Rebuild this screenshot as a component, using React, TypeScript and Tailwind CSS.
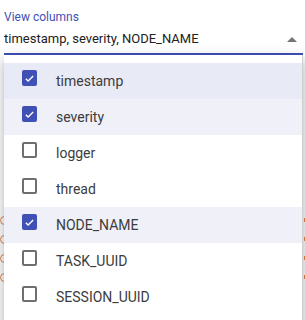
import React from "react";

const items: { label: string; checked: boolean; bg: string }[] = [
  { label: "timestamp", checked: true, bg: "bg-[#e8eaf6]" },
  { label: "severity", checked: true, bg: "bg-[#eff0f8]" },
  { label: "logger", checked: false, bg: "bg-white" },
  { label: "thread", checked: false, bg: "bg-white" },
  { label: "NODE_NAME", checked: true, bg: "bg-[#eff0f8]" },
  { label: "TASK_UUID", checked: false, bg: "bg-white" },
  { label: "SESSION_UUID", checked: false, bg: "bg-white" },
];

function Box({ checked }: { checked: boolean }) {
  if (checked) {
    return (
      <div className="w-[15px] h-[16px] rounded-[2px] bg-[#3f51b5] flex items-center justify-center">
        <svg width="11" height="11" viewBox="0 0 24 24">
          <path d="M4 12.5l5 5L20 6.5" fill="none" stroke="white" strokeWidth="3" />
        </svg>
      </div>
    );
  }
  return <div className="w-[15px] h-[16px] rounded-[2px] border-2 border-[#6f6f6f] bg-white" />;
}

export default function App() {
  return (
    <div
      className="relative w-[305px] h-[320px] overflow-hidden bg-white"
      style={{ fontFamily: "Roboto, 'Liberation Sans', sans-serif" }}
    >
      {/* background content peeking out */}
      <div className="absolute left-[0px] top-[216px] flex flex-col gap-[10px]">
        <div className="w-[9px] h-[9px] rounded-full border border-[#e8844a]" />
        <div className="w-[9px] h-[9px] rounded-full border border-[#e8844a]" />
        <div className="w-[9px] h-[9px] rounded-full border border-[#e8844a]" />
        <div className="w-[9px] h-[9px] rounded-full border border-[#e8844a]" />
      </div>
      <div className="absolute left-[304px] top-[218px] flex flex-col gap-[15px]">
        <div className="w-[1px] h-[4px] bg-[#e8844a]" />
        <div className="w-[1px] h-[4px] bg-[#e8844a]" />
        <div className="w-[1px] h-[4px] bg-[#e8844a]" />
        <div className="w-[1px] h-[4px] bg-[#e8844a]" />
      </div>

      {/* select field */}
      <div className="ml-[4px] mr-[2px] pt-[9px] border-b-2 border-[#3f51b5] h-[55px] flex flex-col">
        <div className="text-[12px] leading-[16px] text-[#3f51b5]">View columns</div>
        <div className="mt-[5px] flex items-center justify-between">
          <span className="text-[13px] leading-[18px] text-[#212121]">timestamp, severity, NODE_NAME</span>
          <svg width="10" height="5" viewBox="0 0 10 5" className="mr-[6px]">
            <path d="M0 5L5 0L10 5Z" fill="#757575" />
          </svg>
        </div>
      </div>

      {/* menu */}
      <div className="absolute top-[55px] left-[4px] w-[299px] h-[300px] bg-white pt-[8px] shadow-[0_5px_5px_-3px_rgba(0,0,0,0.2),0_8px_10px_1px_rgba(0,0,0,0.14),0_3px_14px_2px_rgba(0,0,0,0.12)] border-r border-[#d0d0d0]">
        {items.map((it) => (
          <div key={it.label} className={`h-[36px] flex items-center pl-[18px] ${it.bg}`}>
            <div className="-mt-[6px]">
              <Box checked={it.checked} />
            </div>
            <span className="ml-[19px] text-[14px] text-[#3c3c3c]">{it.label}</span>
          </div>
        ))}
      </div>
    </div>
  );
}
